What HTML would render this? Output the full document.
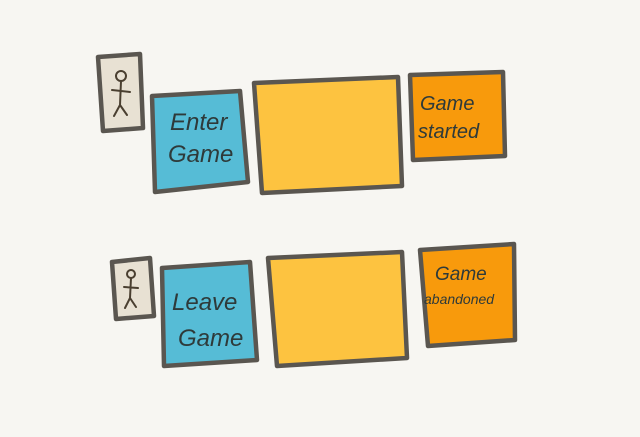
<!DOCTYPE html>
<html><head><meta charset="utf-8"><style>
html,body{margin:0;padding:0;background:#f7f6f2;width:640px;height:437px;overflow:hidden}
svg{display:block}
text{font-family:"Liberation Sans",sans-serif;fill:#2e3a3a;font-style:italic}
</style></head><body>
<svg width="640" height="437" viewBox="0 0 640 437">
<g stroke="#5a5650" stroke-width="4.5" stroke-linejoin="round">
<polygon points="98,57 140,54 143,128 103,131" fill="#e8e1d3"/>
<polygon points="152,96 240,91 248,182 155,192" fill="#56bcd6"/>
<polygon points="254,83 398,77 402,186 262,193" fill="#fdc340"/>
<polygon points="410,75 503,72 505,156 413,160" fill="#f89a0c"/>
<polygon points="112,262 150,258 154,316 116,319" fill="#e8e1d3"/>
<polygon points="162,268 250,262 257,360 164,366" fill="#56bcd6"/>
<polygon points="268,258 402,252 407,358 277,366" fill="#fdc340"/>
<polygon points="420,250 514,244 515,340 428,346" fill="#f89a0c"/>
</g>
<g stroke="#4a3f30" stroke-width="2" fill="none" stroke-linecap="round">
<circle cx="121" cy="76" r="5"/><path d="M121 81 L120 105 M112 90 L130 92 M120 105 L114 116 M120 105 L127 115"/>
<circle cx="131" cy="274" r="4"/><path d="M131 278 L130 298 M124 287 L138 288 M130 298 L125 308 M130 298 L136 307"/>
</g>
<text x="170" y="130" font-size="24">Enter</text>
<text x="168" y="162" font-size="24">Game</text>
<text x="420" y="110" font-size="20">Game</text>
<text x="418" y="138" font-size="20">started</text>
<text x="172" y="310" font-size="24">Leave</text>
<text x="178" y="346" font-size="24">Game</text>
<text x="435" y="280" font-size="19">Game</text>
<text x="424" y="304" font-size="14">abandoned</text>
</svg>
</body></html>
